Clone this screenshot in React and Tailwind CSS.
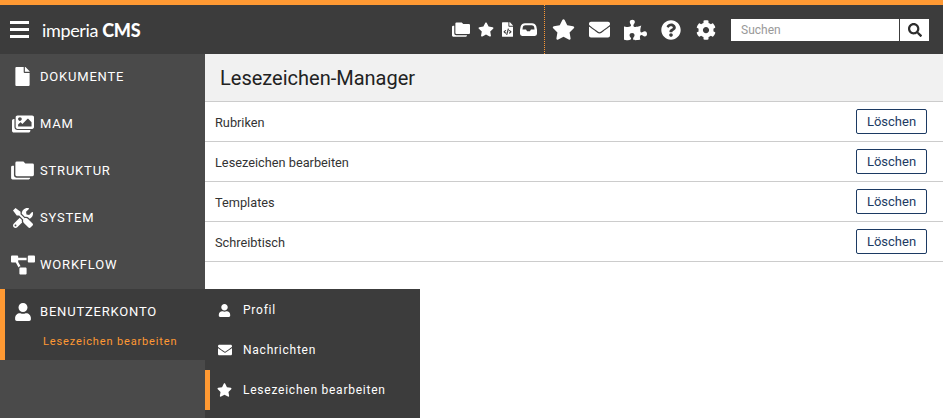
import React from "react";
import { FaFile, FaImages, FaTools, FaProjectDiagram, FaUser, FaEnvelope, FaStar, FaPuzzlePiece, FaQuestionCircle, FaCog, FaSearch, FaFileCode } from "react-icons/fa";

const Folders = ({ className }) => (
  <svg viewBox="0 0 24 20" className={className} fill="currentColor">
    <path d="M6 0.500h7l2 2h7.500A1.500 1.500 0 0 1 24 4v10.500a1.500 1.500 0 0 1-1.500 1.500H6a1.500 1.500 0 0 1-1.500-1.500V2A1.500 1.500 0 0 1 6 0.500z" />
    <path d="M0 6.500A1.500 1.500 0 0 1 1.500 5H3v10a2.500 2.500 0 0 0 2.500 2.500H20v.5a1.500 1.500 0 0 1-1.500 1.500h-17A1.500 1.500 0 0 1 0 18z" />
  </svg>
);

const Inbox = ({ className }) => (
  <svg viewBox="0 0 24 18" className={className} fill="currentColor">
    <path d="M7 0h10c3 0 5 1.500 6 4.500L24 9.500V15a3 3 0 0 1-3 3H3a3 3 0 0 1-3-3V9.500l1-5C2 1.500 4 0 7 0zm.5 3C5.500 3 4.500 4 4 5.500L3.500 9h5l1.500 2.500h4L15.500 9h5L20 5.500C19.500 4 18.500 3 16.500 3z" />
  </svg>
);

const navItems = [
  { label: "Dokumente", Icon: FaFile, icon: "w-[15px] h-[19px]", left: "pl-[15px]" },
  { label: "MAM", Icon: FaImages, icon: "w-[22px] h-[20px]", left: "pl-[12px]" },
  { label: "Struktur", Icon: Folders, icon: "w-[23px] h-[19px]", left: "pl-[11px]" },
  { label: "System", Icon: FaTools, icon: "w-[20px] h-[20px]", left: "pl-[13px]" },
  { label: "Workflow", Icon: FaProjectDiagram, icon: "w-[24px] h-[20px]", left: "pl-[11px]" },
];

const rows = ["Rubriken", "Lesezeichen bearbeiten", "Templates", "Schreibtisch"];

const flyout = [
  { label: "Profil", Icon: FaUser, icon: "w-[13px] h-[13px]" },
  { label: "Nachrichten", Icon: FaEnvelope, icon: "w-[14px] h-[14px]" },
  { label: "Lesezeichen bearbeiten", Icon: FaStar, icon: "w-[15px] h-[14px]", active: true },
];

export default function App() {
  return (
    <div className="relative h-[418px] overflow-hidden bg-white font-['Roboto',sans-serif]">
      <header className="flex h-[54px] items-center border-t-[5px] border-[#ff9933] bg-[#3c3c3c] text-white">
        <div className="ml-[10px] flex w-[19px] flex-col gap-[4px]">
          <span className="h-[3px] bg-white" />
          <span className="h-[3px] bg-white" />
          <span className="h-[3px] bg-white" />
        </div>
        <div className="ml-[13px] font-['Lato',sans-serif] text-[18px] leading-none tracking-[-0.35px]">
          <span className="font-normal">imperia </span>
          <span className="font-black">CMS</span>
        </div>
        <div className="ml-auto flex h-full items-center">
          <div className="flex h-full items-center pr-[7px]">
            <Folders className="h-[15px] w-[18px]" />
            <FaStar className="ml-[8px] h-[15px] w-[16px]" />
            <FaFileCode className="ml-[8px] h-[15px] w-[11px]" />
            <Inbox className="ml-[7px] h-[13px] w-[17px]" />
          </div>
          <span className="h-full w-[1px] bg-[repeating-linear-gradient(to_bottom,#ff9933_0,#ff9933_1px,transparent_1px,transparent_2px)]" />
          <FaStar className="ml-[7px] h-[21px] w-[23px]" />
          <FaEnvelope className="ml-[14px] h-[21px] w-[21px]" />
          <FaPuzzlePiece className="ml-[14px] h-[22px] w-[23px]" />
          <FaQuestionCircle className="ml-[14px] h-[20px] w-[20px]" />
          <FaCog className="ml-[15px] h-[20px] w-[20px]" />
          <div className="ml-[15px] mr-[14px] flex h-[22px] w-[198px] bg-white">
            <input
              placeholder="Suchen"
              className="h-full w-[169px] border-r border-[#3c3c3c] bg-white px-[10px] text-[12px] text-[#333] outline-none placeholder:text-[#999]"
            />
            <button className="flex flex-1 items-center justify-center text-[#2d2d2d]">
              <FaSearch className="h-[14px] w-[14px]" />
            </button>
          </div>
        </div>
      </header>

      <div className="flex h-[364px]">
        <aside className="w-[205px] shrink-0 bg-[#4a4a4a] text-white">
          {navItems.map(({ label, Icon, icon, left }) => (
            <div key={label} className={`flex h-[47px] items-center pb-[2px] ${left}`}>
              <Icon className={`${icon} shrink-0`} />
              <span className="absolute left-[40px] text-[13px] font-normal uppercase tracking-[0.8px]">{label}</span>
            </div>
          ))}
          <div className="h-[71px] border-l-[5px] border-[#ff9933] bg-[#3c3c3c]">
            <div className="flex h-[46px] items-center pl-[9px]">
              <FaUser className="h-[18px] w-[18px]" />
              <span className="ml-[8px] text-[13px] font-normal uppercase tracking-[0.8px]">Benutzerkonto</span>
            </div>
            <div className="pl-[38px] text-[11px] leading-[14px] tracking-[0.86px] text-[#ff9933]">Lesezeichen bearbeiten</div>
          </div>
        </aside>

        <main className="flex-1">
          <h1 className="flex h-[48px] items-center border-b border-[#ccc] bg-[#f1f1f1] pl-[15px] text-[20px] text-[#222]">
            Lesezeichen-Manager
          </h1>
          {rows.map((row) => (
            <div key={row} className="flex h-[40px] items-center justify-between border-b border-[#ccc] pl-[10px] pr-[16px] text-[12.75px] text-[#333]">
              <span className="pt-[2px]">{row}</span>
              <button className="h-[25px] w-[71px] rounded-[2px] border border-[#1c3a63] text-[13px] text-[#1c3a63]">Löschen</button>
            </div>
          ))}
        </main>
      </div>

      <div className="absolute left-[205px] top-[289px] h-[129px] w-[215px] bg-[#3c3c3c] pt-[1px] text-white">
        {flyout.map(({ label, Icon, icon, active }) => (
          <div key={label} className={`flex h-[40px] items-center ${active ? "border-l-[5px] border-[#ff9933] pl-[7px]" : "pl-[12px]"}`}>
            <span className="flex w-[15px] justify-center"><Icon className={icon} /></span>
            <span className="ml-[11px] text-[12px] font-normal tracking-[0.76px]">{label}</span>
          </div>
        ))}
      </div>
    </div>
  );
}
